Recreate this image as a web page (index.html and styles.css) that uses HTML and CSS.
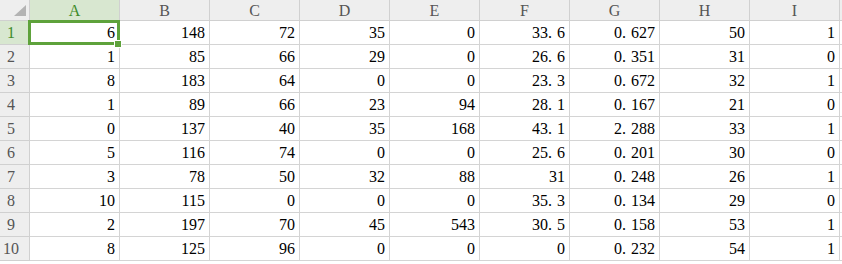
FILE: index.html
```html
<!DOCTYPE html>
<html>
<head>
<meta charset="utf-8">
<link rel="stylesheet" href="styles.css">
</head>
<body>
<div class="sheet">
  <div class="grid">
    <div class="hd corner"><span class="tri"></span></div>
    <div class="hd col sel">A</div><div class="hd col">B</div><div class="hd col">C</div><div class="hd col">D</div><div class="hd col">E</div><div class="hd col">F</div><div class="hd col">G</div><div class="hd col">H</div><div class="hd col">I</div><div class="hd col rest"></div>

    <div class="hd row sel">1</div><div class="c">6</div><div class="c">148</div><div class="c">72</div><div class="c">35</div><div class="c">0</div><div class="c">33<span class="d">.</span>6</div><div class="c">0<span class="d">.</span>627</div><div class="c">50</div><div class="c">1</div><div class="c rest"></div>
    <div class="hd row">2</div><div class="c">1</div><div class="c">85</div><div class="c">66</div><div class="c">29</div><div class="c">0</div><div class="c">26<span class="d">.</span>6</div><div class="c">0<span class="d">.</span>351</div><div class="c">31</div><div class="c">0</div><div class="c rest"></div>
    <div class="hd row">3</div><div class="c">8</div><div class="c">183</div><div class="c">64</div><div class="c">0</div><div class="c">0</div><div class="c">23<span class="d">.</span>3</div><div class="c">0<span class="d">.</span>672</div><div class="c">32</div><div class="c">1</div><div class="c rest"></div>
    <div class="hd row">4</div><div class="c">1</div><div class="c">89</div><div class="c">66</div><div class="c">23</div><div class="c">94</div><div class="c">28<span class="d">.</span>1</div><div class="c">0<span class="d">.</span>167</div><div class="c">21</div><div class="c">0</div><div class="c rest"></div>
    <div class="hd row">5</div><div class="c">0</div><div class="c">137</div><div class="c">40</div><div class="c">35</div><div class="c">168</div><div class="c">43<span class="d">.</span>1</div><div class="c">2<span class="d">.</span>288</div><div class="c">33</div><div class="c">1</div><div class="c rest"></div>
    <div class="hd row">6</div><div class="c">5</div><div class="c">116</div><div class="c">74</div><div class="c">0</div><div class="c">0</div><div class="c">25<span class="d">.</span>6</div><div class="c">0<span class="d">.</span>201</div><div class="c">30</div><div class="c">0</div><div class="c rest"></div>
    <div class="hd row">7</div><div class="c">3</div><div class="c">78</div><div class="c">50</div><div class="c">32</div><div class="c">88</div><div class="c">31</div><div class="c">0<span class="d">.</span>248</div><div class="c">26</div><div class="c">1</div><div class="c rest"></div>
    <div class="hd row">8</div><div class="c">10</div><div class="c">115</div><div class="c">0</div><div class="c">0</div><div class="c">0</div><div class="c">35<span class="d">.</span>3</div><div class="c">0<span class="d">.</span>134</div><div class="c">29</div><div class="c">0</div><div class="c rest"></div>
    <div class="hd row">9</div><div class="c">2</div><div class="c">197</div><div class="c">70</div><div class="c">45</div><div class="c">543</div><div class="c">30<span class="d">.</span>5</div><div class="c">0<span class="d">.</span>158</div><div class="c">53</div><div class="c">1</div><div class="c rest"></div>
    <div class="hd row">10</div><div class="c">8</div><div class="c">125</div><div class="c">96</div><div class="c">0</div><div class="c">0</div><div class="c">0</div><div class="c">0<span class="d">.</span>232</div><div class="c">54</div><div class="c">1</div><div class="c rest"></div>
  </div>
  <div class="selbox"><span class="handle"></span></div>
</div>
</body>
</html>
```

FILE: styles.css
```css
html, body {
  margin: 0;
  padding: 0;
  background: #ffffff;
}
.sheet {
  position: relative;
  width: 842px;
  height: 264px;
  overflow: hidden;
  font-family: "Liberation Serif", "Times New Roman", serif;
  font-size: 16px;
  color: #000;
}
.grid {
  display: grid;
  grid-template-columns: 30px repeat(9, 90px) 1fr;
  grid-template-rows: 21px repeat(10, 24px);
}
.grid > div {
  box-sizing: border-box;
  border-right: 1px solid #d4d4d4;
  border-bottom: 1px solid #d4d4d4;
}
.hd {
  background: #eeeeee;
  color: #555555;
  display: flex;
  align-items: center;
}
.grid > .hd {
  border-color: #d0d0d0;
}
.col {
  justify-content: center;
  font-size: 16px;
  padding-top: 1px;
}
.row {
  justify-content: center;
  padding-right: 7px;
}
.hd.sel {
  background: #d8e7d0;
  color: #3e8b2a;
}
.corner {
  position: relative;
}
.tri {
  position: absolute;
  right: 3px;
  bottom: 4px;
  width: 0;
  height: 0;
  border-left: 12px solid transparent;
  border-bottom: 11px solid #b3b3b3;
}
.c {
  display: flex;
  align-items: center;
  justify-content: flex-end;
  padding-right: 4px;
  padding-top: 1px;
}
.d {
  margin-right: 5px;
}
.selbox {
  position: absolute;
  left: 28px;
  top: 20px;
  width: 92px;
  height: 25px;
  box-sizing: border-box;
  border: 3px solid #5ea23b;
}
.handle {
  position: absolute;
  right: -4px;
  bottom: -5px;
  width: 6px;
  height: 6px;
  background: #5ea23b;
  outline: 1px solid #ffffff;
}
```
